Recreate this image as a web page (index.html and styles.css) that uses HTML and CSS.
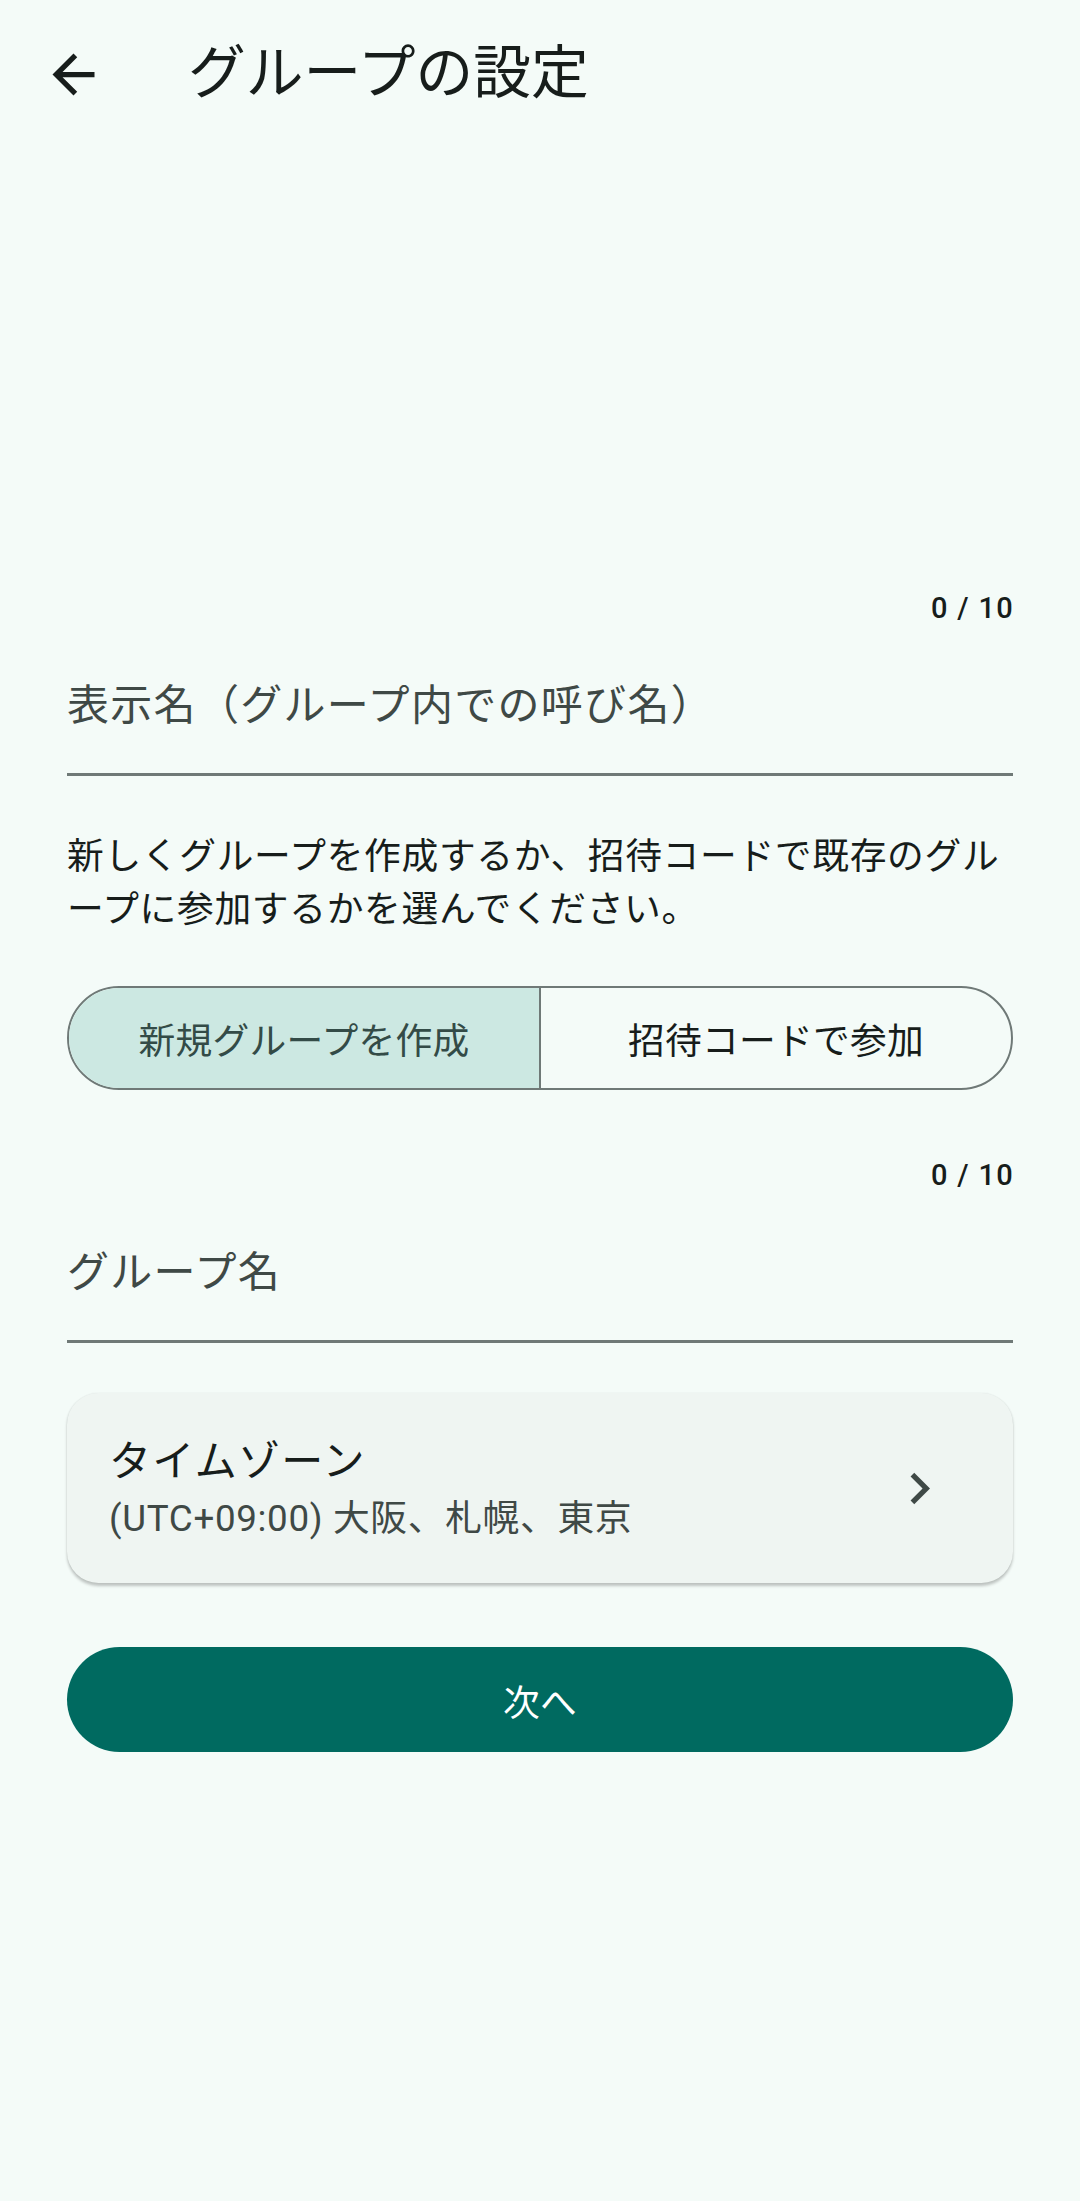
FILE: index.html
```html
<!DOCTYPE html>
<html lang="ja">
<head>
<meta charset="utf-8">
<title>グループの設定</title>
<link rel="stylesheet" href="styles.css">
</head>
<body>
<header class="appbar">
  <button class="nav-btn" aria-label="戻る">
    <svg viewBox="0 0 24 24" width="63" height="63"><path d="M20 11H7.83l5.59-5.59L12 4l-8 8 8 8 1.41-1.41L7.83 13H20v-2z" fill="#171d1b"/></svg>
  </button>
  <h1 class="title">グループの設定</h1>
</header>
<main class="content">
  <div class="counter counter-first">0 / 10</div>
  <div class="field"><span class="placeholder">表示名（グループ内での呼び名）</span></div>
  <p class="desc">新しくグループを作成するか、招待コードで既存のグループに参加するかを選んでください。</p>
  <div class="segmented">
    <div class="seg seg-selected">新規グループを作成</div>
    <div class="seg seg-right">招待コードで参加</div>
  </div>
  <div class="counter counter-second">0 / 10</div>
  <div class="field"><span class="placeholder">グループ名</span></div>
  <div class="card">
    <div class="card-text">
      <div class="card-title">タイムゾーン</div>
      <div class="card-sub">(UTC+09:00) 大阪、札幌、東京</div>
    </div>
    <svg class="chevron" viewBox="0 0 24 24" width="63" height="63"><path d="M10 6L8.59 7.41 13.17 12l-4.58 4.59L10 18l6-6z" fill="#3f4946"/></svg>
  </div>
  <button class="next-btn">次へ</button>
</main>
</body>
</html>
```

FILE: styles.css
```css
* { box-sizing: border-box; }
html, body {
  margin: 0;
  padding: 0;
  background: #f4fbf8;
}
body {
  font-family: Roboto, "Noto Sans CJK JP", sans-serif;
  color: #171d1b;
  width: 1080px;
  min-height: 2201px;
}
.appbar {
  height: 148px;
  display: flex;
  align-items: center;
  padding-left: 42px;
}
.nav-btn {
  width: 63px;
  height: 63px;
  padding: 0;
  border: 0;
  background: transparent;
  display: flex;
}
.title {
  margin: 0 0 0 83px;
  font-size: 57.75px;
  font-weight: 400;
  line-height: 73.5px;
  color: #171d1b;
}
.content {
  padding: 0 67px;
  display: flex;
  flex-direction: column;
}
.counter {
  text-align: right;
  font-size: 29px;
  font-weight: 500;
  line-height: 42px;
  height: 42px;
  color: #171d1b;
  letter-spacing: 1.3px;
  margin-right: -1px;
}
.counter-first { margin-top: 439px; }
.counter-second { margin-top: 64px; }
.field {
  height: 147px;
  padding-top: 8px;
  border-bottom: 3px solid #6f7977;
  display: flex;
  align-items: center;
}
.placeholder {
  font-size: 42px;
  line-height: 63px;
  letter-spacing: 1.3px;
  color: #3f4946;
}
.desc {
  margin: 55px 0 0;
  font-size: 36.75px;
  line-height: 52.5px;
  letter-spacing: 0.66px;
  color: #171d1b;
}
.segmented {
  margin-top: 50px;
  height: 104px;
  display: flex;
  border: 2.6px solid #6f7977;
  border-radius: 52px;
  overflow: hidden;
}
.seg {
  flex: 1;
  display: flex;
  align-items: center;
  justify-content: center;
  font-size: 36.75px;
  letter-spacing: 0.26px;
  color: #171d1b;
}
.seg-selected {
  background: #cce8e2;
  color: #334b47;
}
.seg-right {
  border-left: 2.6px solid #6f7977;
}
.card {
  margin-top: 50px;
  height: 190px;
  background: #eff5f2;
  border-radius: 31.5px;
  box-shadow: 0 2.6px 3px rgba(0, 0, 0, 0.22), 0 0 1.5px rgba(0, 0, 0, 0.08);
  display: flex;
  align-items: center;
  padding: 0 62px 0 42px;
}
.card-text {
  flex: 1;
  display: flex;
  flex-direction: column;
}
.card-title {
  font-size: 42px;
  line-height: 63px;
  letter-spacing: 1.3px;
  color: #171d1b;
}
.card-sub {
  font-size: 36.75px;
  line-height: 52.5px;
  letter-spacing: 0.66px;
  color: #3f4946;
}
.chevron { flex: none; }
.next-btn {
  margin-top: 64px;
  height: 105px;
  border: 0;
  border-radius: 52.5px;
  background: #006a60;
  color: #ffffff;
  font-family: Roboto, "Noto Sans CJK JP", sans-serif;
  font-size: 36.75px;
  letter-spacing: 0.26px;
  width: 100%;
  padding: 0;
}
```
